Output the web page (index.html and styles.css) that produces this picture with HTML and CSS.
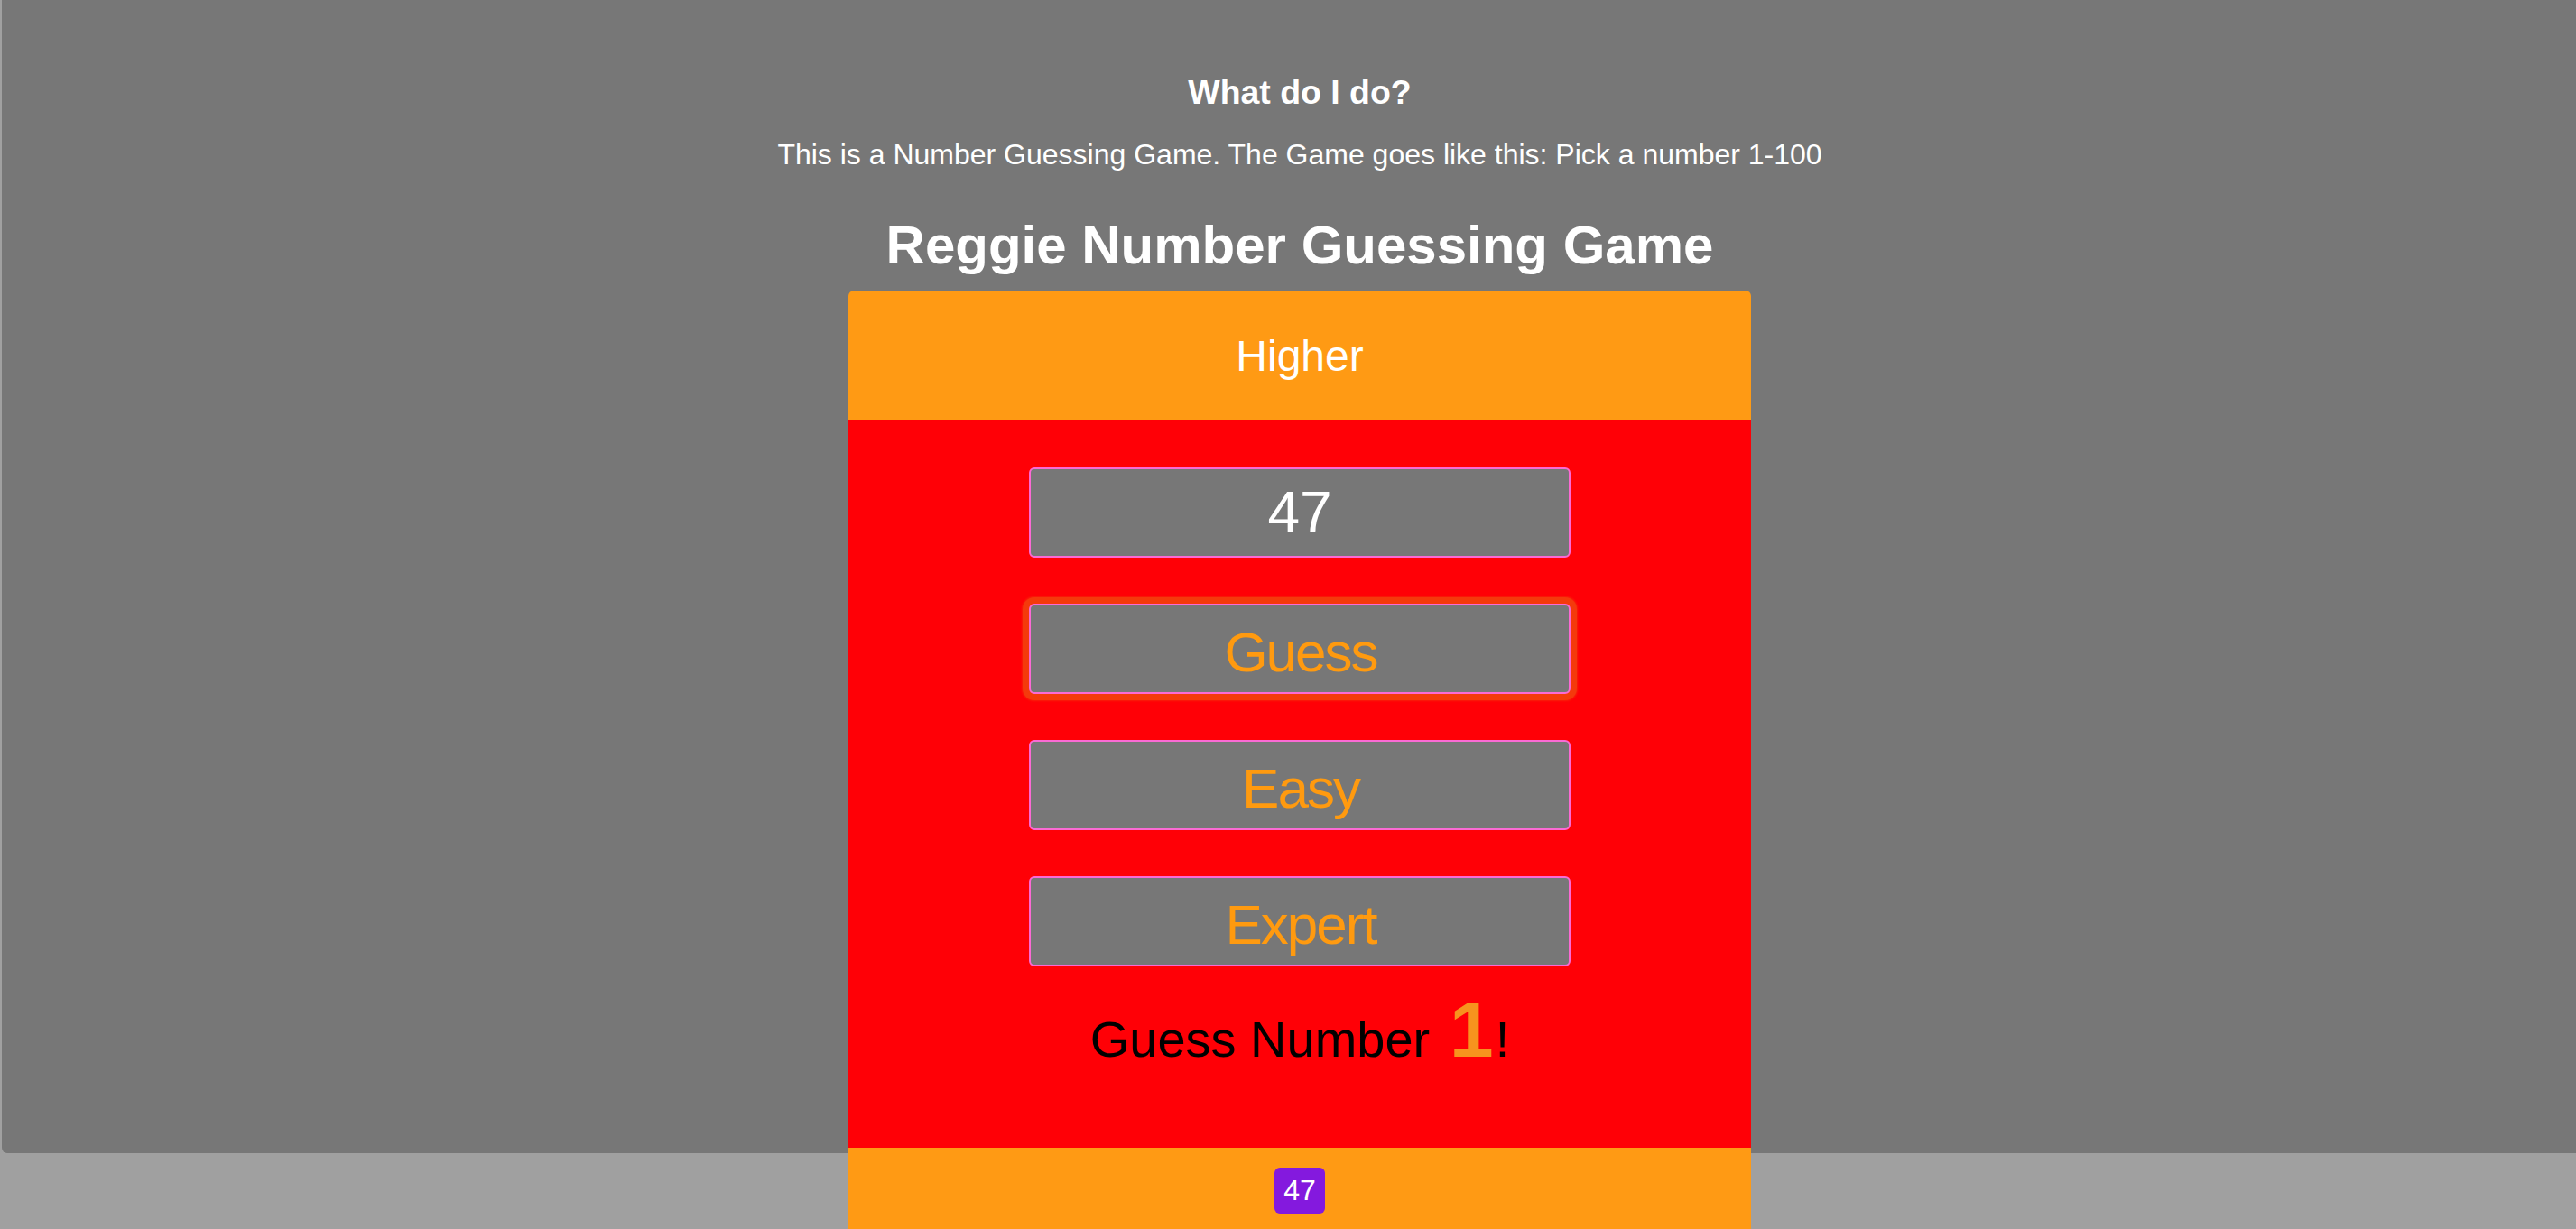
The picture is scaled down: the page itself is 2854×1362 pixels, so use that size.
FILE: index.html
```html
<!DOCTYPE html>
<html lang="en">
<head>
<meta charset="utf-8">
<title>Reggie Number Guessing Game</title>
<link rel="stylesheet" href="styles.css">
</head>
<body>
<div class="frame">
  <div class="page">
    <h3 class="help-title">What do I do?</h3>
    <p class="help-text">This is a Number Guessing Game. The Game goes like this: Pick a number 1-100</p>
    <h1 class="title">Reggie Number Guessing Game</h1>
    <div class="card">
      <div class="card-header">Higher</div>
      <div class="card-body">
        <input class="field" type="text" value="47">
        <button class="btn btn-focus">Guess</button>
        <button class="btn">Easy</button>
        <button class="btn btn-last">Expert</button>
        <p class="count">Guess Number <span class="num">1</span>!</p>
      </div>
      <div class="card-footer"><span class="badge">47</span></div>
    </div>
  </div>
</div>
</body>
</html>
```

FILE: styles.css
```css
html {
  background: #a0a0a0;
}

body {
  margin: 0;
  font-family: "Liberation Sans", Arial, Helvetica, sans-serif;
  color: #ffffff;
}

.frame {
  height: 1362px;
  box-sizing: border-box;
  padding-left: 2px;
  overflow: hidden;
  background: #a0a0a0;
}

.page {
  height: 1278px;
  box-sizing: border-box;
  padding-left: 24px;
  background: #777777;
  border-bottom-left-radius: 6px;
  display: flex;
  flex-direction: column;
  align-items: center;
}

.help-title {
  margin: 81px 0 0;
  font-size: 37.44px;
  line-height: 43px;
  font-weight: bold;
}

.help-text {
  margin: 29px 0 0;
  font-size: 32px;
  line-height: 37px;
}

.title {
  margin: 47px 0 0;
  font-size: 60px;
  line-height: 69px;
  font-weight: bold;
}

.card {
  flex-shrink: 0;
  width: 1000px;
  margin-top: 16px;
  display: flex;
  flex-direction: column;
}

.card-header {
  height: 144px;
  background: #ff9a14;
  border-radius: 6px 6px 0 0;
  display: flex;
  align-items: center;
  justify-content: center;
  font-size: 48px;
  line-height: 55px;
}

.card-body {
  height: 806px;
  box-sizing: border-box;
  padding-top: 52px;
  background: #ff0006;
  display: flex;
  flex-direction: column;
  align-items: center;
}

.field,
.btn {
  width: 600px;
  height: 100px;
  box-sizing: border-box;
  margin: 0 0 51px;
  border: 2px solid #fb6ad4;
  border-radius: 6px;
  background: #777777;
  font-family: "Liberation Sans", Arial, Helvetica, sans-serif;
  text-align: center;
  outline: none;
}

.field {
  padding: 0;
  color: #ffffff;
  font-size: 64px;
}

.btn {
  padding: 6px 0 0 2px;
  color: #ff9a0f;
  font-size: 62px;
  letter-spacing: -2px;
}

.btn-focus {
  box-shadow: 0 0 0 7px #f43a0c, 0 0 2px 8px rgba(244, 58, 12, 0.55);
}

.btn-last {
  margin-bottom: 26px;
}

.count {
  margin: 0;
  color: #000000;
  font-size: 56px;
  line-height: 56px;
}

.num {
  margin: 0 2px 0 6px;
  color: #f7931e;
  font-size: 88px;
  line-height: 88px;
  font-weight: bold;
}

.card-footer {
  background: #ff9a14;
  padding: 22px 0 30px;
  display: flex;
  justify-content: center;
}

.badge {
  padding: 7px 10px;
  border-radius: 6px;
  background: #8419de;
  color: #ffffff;
  font-size: 32px;
  line-height: 37px;
}
```
